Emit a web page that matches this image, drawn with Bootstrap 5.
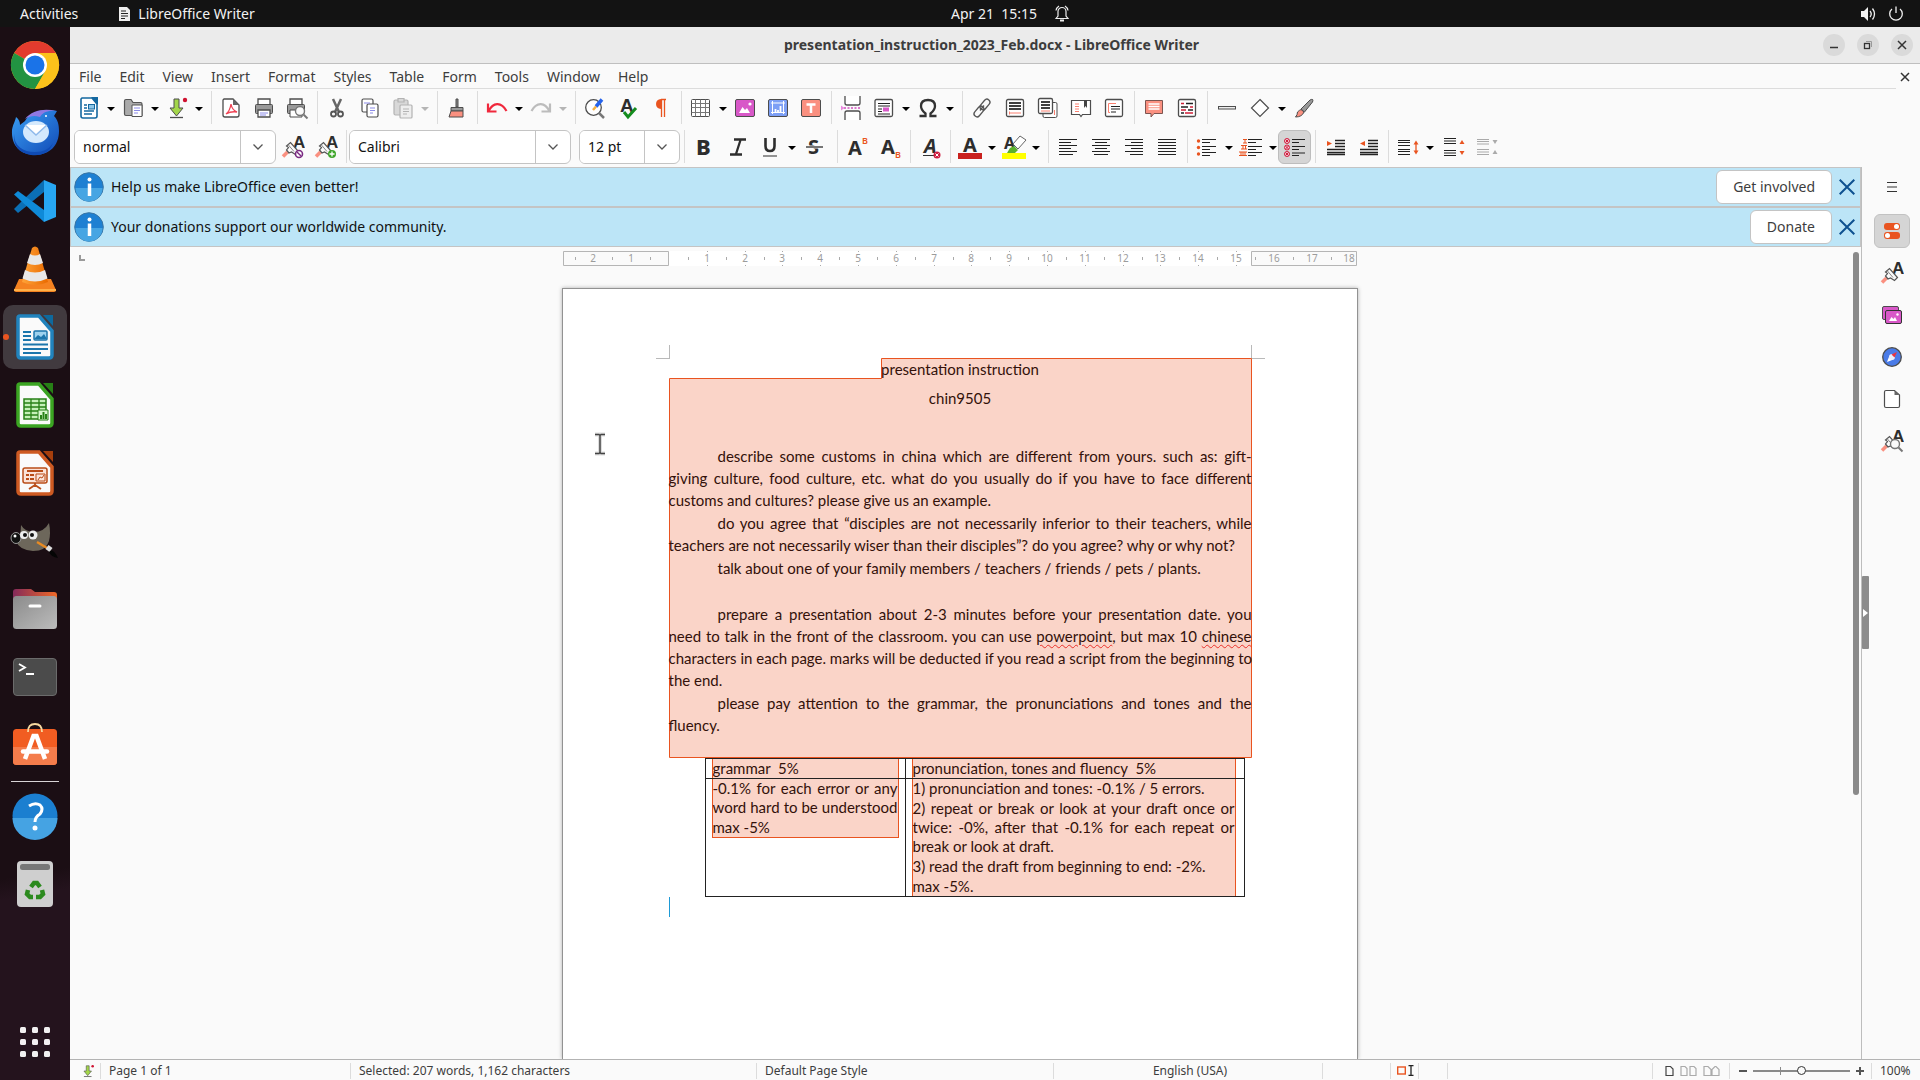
<!DOCTYPE html>
<html lang="en">
<head>
<meta charset="utf-8">
<meta name="viewport" content="width=device-width, initial-scale=1">
<title>presentation_instruction_2023_Feb.docx - LibreOffice Writer</title>
<link href="https://cdn.jsdelivr.net/npm/bootstrap@5.3.0/dist/css/bootstrap.min.css" rel="stylesheet">
<style>
  body { font-family: "Noto Sans", sans-serif; font-size: 14px; line-height: 20px; color: #3d3d3d; background: #fafafa; }
  button, input { font: inherit; color: inherit; }
  button { background: none; border: 0; padding: 0; }
  svg { display: block; flex: none; overflow: visible; }
  .topbar { height: 27px; background: #131313; color: #f2f2f2; }
  .topbar button { color: #f2f2f2; }
  .topbar > div { flex: 1 1 0; }
  .topbar .activities { margin-left: 20px; margin-right: 41px; }
  .topbar .clock { margin-left: 116px; gap: 18px; }
  .dock { width: 70px; background: linear-gradient(170deg, #1b0e14 0 80%, #24131d 82%); padding: 6px 3px 6px; gap: 4px; }
  .dock-item { height: 64px; width: 64px; border-radius: 10px; position: relative; display: flex; align-items: center; justify-content: center; }
  .dock-item.current { background: #413a3f; }
  .dock-item.current::before { content: ""; position: absolute; left: 0; width: 6px; height: 6px; border-radius: 50%; background: #e95420; }
  .dock-line { width: 48px; height: 1px; background: #d8d4d6; margin-bottom: -2px; }
  .titlebar { height: 37px; background: #ebebeb; border-bottom: 1px solid #bfbfbf; font-weight: 700; }
  .titlebar > div { flex: 1 1 0; }
  .titlebar .win-btns { gap: 12px; padding-right: 7px; }
  .win-btn { width: 22px; height: 22px; border-radius: 50%; background: #dadada; display: flex; align-items: center; justify-content: center; }
  .menubar { height: 25px; }
  .menubar nav { border-bottom: 1px solid #dcdcdc; }
  .menubar a { color: #3d3d3d; text-decoration: none; padding: 3px 9px 1px; }
  .menubar .doc-close { width: 24px; }
  .toolrow { height: 39px; padding: 0 0 2px 2px; }
  .toolrow.fmt { padding-left: 4px; }
  .tool { width: 33px; height: 34px; display: flex; align-items: center; justify-content: center; border-radius: 6px; flex: none; }
  .tool.on { background: #d5d5d5; border: 1px solid #bdbdbd; }
  .drop { width: 11px; height: 34px; flex: none; display: flex; align-items: center; justify-content: center; }
  .drop::after { content: ""; border: 4px solid transparent; border-top-color: #000; border-bottom: 0; margin-top: 2px; }
  .drop:disabled::after { border-top-color: #b5b5b5; }
  .tsep { width: 1px; height: 33px; background: #dcdcdc; margin: 0 2px 0 4px; flex: none; }
  .drop + .tsep, .tsep.wide { margin-left: 7px; }
  .combo { height: 34px; border: 1px solid #c4c4c4; border-radius: 6px; background: #fff; display: flex; flex: none; overflow: hidden; color: #000; }
  .combo input { border: 0; outline: 0; padding: 0 8px; flex: 1 1 0; min-width: 0; background: #fff; color: #111; }
  .combo button { width: 35px; border-left: 1px solid #c4c4c4; display: flex; align-items: center; justify-content: center; }
  .combo.w-style { width: 202px; } .combo.w-font { width: 222px; } .combo.w-size { width: 101px; margin-left: 8px; }
  .infobar { height: 40px; background: #bce5f7; border: 1px solid #c4c4c4; color: #111; padding: 0 3px; }
  .infobar span { padding-left: 7px; }
  .infobar .act { height: 34px; border: 1px solid #c4c4c4; border-radius: 6px; background: #fff; color: #3d3d3d; padding: 0 16px; }
  .infobar .shut { width: 30px; height: 34px; display: flex; align-items: center; justify-content: center; margin-right: -5px; }
  .writer { min-width: 0; }
  .canvas-pane { border-right: 1px solid #bdbdbd; min-width: 0; }
  .ruler-row { height: 41px; padding-top: 4px; position: relative; }
  .tab-mark { position: absolute; left: 9px; top: 8px; width: 6px; height: 6px; border: 2px solid #9a9a9a; border-top: 0; border-right: 0; }
  .ruler text { font-size: 10px; fill: #9c9c9c; text-anchor: middle; }
  .sheet { width: 796px; background: #fff; border: 1px solid #929292; border-bottom: 0; box-shadow: 0 0 4px rgba(0,0,0,.3); padding: 69px 105px 0 106px; position: relative; flex: none; height: 100%; }
  .sheet, .sheet table { font-family: Lato, sans-serif; font-size: 15px; line-height: 22px; color: #33110a; }
  .story { position: relative; height: 400px; }
  .story .hl { position: absolute; left: 0; top: 0; }
  .story p { position: relative; margin: 0 0 1px; white-space: nowrap; min-height: 22px; }
  .story p.head { text-align: center; margin-bottom: 7px; }
  .ln { display: block; }
  .ln.full { text-align: justify; text-align-last: justify; white-space: normal; }
  .ln.ind { padding-left: 49px; }
  .typo { text-decoration: underline wavy #e8302a 1px; text-underline-offset: 2px; }
  .corner { position: absolute; top: 56px; width: 14px; height: 14px; border-bottom: 1px solid #b9b9b9; }
  .corner.lt { left: 93px; border-right: 1px solid #b9b9b9; } .corner.rt { right: 92px; border-left: 1px solid #b9b9b9; }
  .marks { width: 540px; margin-left: 36px; table-layout: fixed; border-collapse: collapse; }
  .marks td { border: 1px solid #222; padding: 0 6px; vertical-align: top; }
  .marks.marks { line-height: 19px; }
  .marks .pick { background: #fad4c8; border: 1px solid #e95420; border-top-width: 0; white-space: nowrap; }
  .marks .pick.flush { border-bottom: 0; }
  .marks p { margin: 0 0 1px; } .marks p:last-child { margin: 0; }
  .marks .cell-r { padding-right: 8px; }
  .caret { width: 1px; height: 20px; background: #1e9ad6; }
  .vbar { width: 12px; padding: 5px 0 0 4px; }
  .vbar div { width: 6px; height: 543px; border-radius: 3px; background: #8a8a8a; }
  .pointer { position: absolute; left: 522px; top: 185px; }
  .sidegrip { width: 7px; padding-top: 409px; }
  .sidegrip button { width: 7px; height: 73px; background: #8c8c8c; display: flex; align-items: center; justify-content: center; border-radius: 1px; }
  .deck { width: 51px; padding: 3px 6px 0 0; gap: 8px; }
  .deck button { width: 36px; height: 34px; border-radius: 6px; display: flex; align-items: center; justify-content: center; border: 1px solid transparent; }
  .deck button.on { background: #d5d5d5; border-color: #c2c2c2; }
  .deck button:first-child { margin-bottom: 2px; }
  .statusbar { height: 21px; border-top: 1px solid #b3b3b3; font-size: 12px; line-height: 20px; padding-top: 1px; }
  .statusbar > div { border-left: 1px solid #dcdcdc; height: 16px; padding-left: 8px; display: flex; align-items: center; flex: none; white-space: nowrap; }
  .statusbar > div:first-child { border-left: 0; }
  .zoomer { appearance: none; width: 97px; height: 14px; margin: 0 5px; background: linear-gradient(#8a8a8a,#8a8a8a) center/100% 2px no-repeat, linear-gradient(#8a8a8a,#8a8a8a) 27px 50%/1px 8px no-repeat; }
  .zoomer::-webkit-slider-thumb { appearance: none; width: 9px; height: 9px; border-radius: 50%; background: #fafafa; border: 1px solid #333; }
</style>
</head>
<body>
<svg width="0" height="0" class="position-absolute" aria-hidden="true">
  <defs>
    <symbol id="chev" viewBox="0 0 12 8"><path d="M1.500 1.500 6 6l4.500-4.500" fill="none" stroke="#555" stroke-width="1.300"/></symbol>
    <symbol id="brushA" viewBox="0 0 24 24"><text x="12" y="13" font-family="Liberation Sans" font-weight="700" font-size="17" fill="#2d2d2d">A</text><path d="M2 21.500 6.500 17" stroke="#fa9080" stroke-width="3.500"/><path d="m5.500 15 2.500 3 2.500-1 4 2.500 3-3-8-9-4 3.500 2 1.500z" fill="#fafafa" stroke="#555" stroke-width="1.200"/><path d="m7 9.500 6 7" stroke="#888"/></symbol>
    <symbol id="saveic" viewBox="0 0 24 24"><path d="M9 3h5v9h4l-6.500 8L5 12h4z" fill="#a3d64a" stroke="#4d4d4d"/><path d="M5 21.500h13" stroke="#4d4d4d" stroke-width="1.300"/><circle cx="20" cy="4" r="2.200" fill="#cf1230"/></symbol>
    <symbol id="infoic" viewBox="0 0 30 30"><circle cx="15" cy="15" r="14.300" fill="#1e80d2" stroke="#3b75a3"/><path d="M1.500 16a13.500 13.500 0 0 0 27 0z" fill="#46a5e3"/><circle cx="15.500" cy="7.500" r="2" fill="#fff"/><path d="M15.500 11.500v12.500" stroke="#fff" stroke-width="3.500"/></symbol>
    <symbol id="xblue" viewBox="0 0 16 16"><path d="m.7.700 14.600 14.600M15.300.7.700 15.300" stroke="#0e5190" stroke-width="2" fill="none"/></symbol>
    <symbol id="xsmall" viewBox="0 0 10 10"><path d="m1 1 8 8M9 1 1 9" stroke="#333" stroke-width="1.500" fill="none"/></symbol>
    <symbol id="mag" viewBox="0 0 24 24"><circle cx="15" cy="15" r="4.500" fill="#fafafa" stroke="#777" stroke-width="1.400"/><path d="m18.500 18.500 4 4" stroke="#777" stroke-width="2"/></symbol>
    <linearGradient id="grayg" x2="1" y2="1"><stop stop-color="#8b8b8b"/><stop offset="1" stop-color="#bcbcbc"/></linearGradient>
    <linearGradient id="foldg"><stop stop-color="#842a5a"/><stop offset="1" stop-color="#f06a28"/></linearGradient>
    <linearGradient id="coneg"><stop stop-color="#ffa338"/><stop offset="1" stop-color="#e96a00"/></linearGradient>
    <linearGradient id="birdg" x2="1" y2="1"><stop stop-color="#3aa0f5"/><stop offset="1" stop-color="#1149b5"/></linearGradient>
  </defs>
</svg>

<div class="vh-100 d-flex flex-column overflow-hidden">
  <header class="topbar d-flex align-items-center flex-shrink-0">
    <div class="d-flex align-items-center">
      <button type="button" class="activities">Activities</button>
      <button type="button" class="d-flex align-items-center gap-2">
        <svg width="11" height="15" viewBox="0 0 11 15"><path d="M0 1h8l3 3v11H0z" fill="#eee"/><path d="M2 5h5M2 7.500h7M2 10h7M2 12.500h4" stroke="#222"/></svg>
        LibreOffice Writer
      </button>
    </div>
    <button type="button" class="clock d-flex align-items-center"><span>Apr 21&nbsp; 15:15</span>
      <svg width="14" height="17" viewBox="0 0 14 17" fill="none" stroke="#eee" stroke-width="1.200"><path d="M1 13.500 3 11V6.500a4 4 0 0 1 8 0V11l2 2.500zM1 5.500Q1.500 2.500 4 1M13 5.500Q12.500 2.500 10 1"/><path d="M5 15.500h4" stroke-width="2"/></svg>
    </button>
    <div class="d-flex justify-content-end align-items-center gap-2 pe-3">
      <svg width="16" height="16" viewBox="0 0 16 16" class="me-1"><path d="M1 5h3l4-4v14l-4-4H1z" fill="#f2f2f2"/><path d="M10 5q2.500 3 0 6M12.500 2.500q4 5.500 0 11" fill="none" stroke="#f2f2f2" stroke-width="1.300"/></svg>
      <svg width="16" height="16" viewBox="0 0 16 16" fill="none" stroke="#f2f2f2" stroke-width="1.300"><path d="M4 3a6.300 6.300 0 1 0 8 0M8 .5V7"/></svg>
    </div>
  </header>

  <div class="d-flex flex-grow-1 overflow-hidden">
    <nav class="dock d-flex flex-column align-items-center flex-shrink-0" aria-label="Dock">
      <a class="dock-item" href="#" aria-label="Chrome"><svg width="48" height="48" viewBox="0 0 48 48"><circle cx="24" cy="24" r="24" fill="#fcc21b"/><path d="M24 24 3.200 12A24 24 0 0 1 44.800 12z" fill="#e33b2e"/><path d="M24 24 3.200 12A24 24 0 0 0 24 48l10.400-18z" fill="#229342"/><path d="M24 12h20.800A24 24 0 0 1 24 48l10.400-18z" fill="#fcc21b"/><circle cx="24" cy="24" r="12" fill="#fff"/><circle cx="24" cy="24" r="9.500" fill="#1a73e8"/></svg></a>
      <a class="dock-item" href="#" aria-label="Thunderbird"><svg width="50" height="50" viewBox="0 0 50 50"><path d="M2 22C3 16 5 14 6 9c3 2 4 5 4 8 2-2 4-3 5-4C20 4 34 0 47 3l-3 5c4 4 5 9 5 15 0 15-10 24-24 24S1 38 2 22z" fill="url(#birdg)"/><path d="M15 11C22 2 34 0 47 3c-9-1-14 1-17 6-6-2-10-1-15 2z" fill="#8f78e2"/><path d="M4 26c0 12 9 18 21 18 9 0 14-3 18-9-4 11-13 13-22 12C9 45 3 38 4 26z" fill="#0f4bb5"/><ellipse cx="26" cy="24" rx="13" ry="11" fill="#d4e9fd"/><path d="m15 17 11 10 11-10" fill="#fff" stroke="#8fb9ea" stroke-width="1.500"/><circle cx="36" cy="8" r="1" fill="#fff"/></svg></a>
      <a class="dock-item" href="#" aria-label="Visual Studio Code"><svg width="44" height="44" viewBox="0 0 44 44"><path d="M31 1 11 20 1 30l4 4L31 13z" fill="#0b6fb5"/><path d="M5 12 1 15.500 31 43V31z" fill="#0f8ad8"/><path d="M31 1 43 6v32l-12 5z" fill="#27a6f2"/></svg></a>
      <a class="dock-item" href="#" aria-label="VLC"><svg width="44" height="48" viewBox="0 0 44 48"><path d="M6 34h32l5 11q0 2-2 2H3q-2 0-2-2z" fill="#f58220"/><path d="M19 3q3-3 6 0l10 34q-13 6-26 0z" fill="url(#coneg)"/><path d="m17 9-3 9q8 4 16 0l-3-9q-5 3-10 0zM12 25l-2.500 8.500q12.500 6 25 0L32 25q-10 5-20 0z" fill="#e8e8e8"/><path d="M1 45h42" stroke="#ffb14a" stroke-width="2"/></svg></a>
      <a class="dock-item current" href="#" aria-label="LibreOffice Writer"><svg width="38" height="46" viewBox="0 0 38 46"><path d="M4 2h19l13 15v24q0 3-3 3H5q-3 0-3-3V4q0-2 2-2z" fill="#fafafa" stroke="#2183bd" stroke-width="3.500"/><path d="M27 1h10v11z" fill="#0e699d"/><path d="M7 18h8M7 22h8M7 26h8M7 30.500h25M7 35h25M7 39h18" stroke="#1c76ac" stroke-width="1.800"/><rect x="18" y="17" width="13" height="9" rx="1" fill="#9ed2ee" stroke="#1c76ac" stroke-width="1.500"/><path d="m18 25 4-4 3 2 3-3 3 5z" fill="#1c76ac"/></svg></a>
      <a class="dock-item" href="#" aria-label="LibreOffice Calc"><svg width="38" height="46" viewBox="0 0 38 46"><path d="M4 2h19l13 15v24q0 3-3 3H5q-3 0-3-3V4q0-2 2-2z" fill="#fafafa" stroke="#3ba522" stroke-width="3.500"/><path d="M27 1h10v11z" fill="#278016"/><rect x="8" y="17" width="22" height="20" fill="#c5f0b8" stroke="#278016" stroke-width="1.500"/><path d="M8 21h22M8 25h22M8 29h22M8 33h22M15 17v20M23 17v20" stroke="#278016" stroke-width="1.300"/><path d="M22 28h10v10H22z" fill="#d7f6cd" stroke="#278016"/><path d="M25 37v-4M27.500 37v-7M30 37v-5" stroke="#278016" stroke-width="2"/></svg></a>
      <a class="dock-item" href="#" aria-label="LibreOffice Impress"><svg width="38" height="46" viewBox="0 0 38 46"><path d="M4 2h19l13 15v24q0 3-3 3H5q-3 0-3-3V4q0-2 2-2z" fill="#fafafa" stroke="#ce5a22" stroke-width="3.500"/><path d="M27 1h10v11z" fill="#a63e0c"/><rect x="7" y="18" width="24" height="15" rx="2" fill="#fbe3d8" stroke="#b94d18" stroke-width="1.500"/><path d="M11 21h16M10 25h3M10 29h3M14 25h4M14 29h4M19 33v4M19 35l-6 4M19 35l6 4" stroke="#b94d18" stroke-width="1.800"/><path d="M20 24h9v7h-9zM22 30l2-3 2 1 2-3" fill="none" stroke="#b94d18"/></svg></a>
      <a class="dock-item" href="#" aria-label="GIMP"><svg width="48" height="40" viewBox="0 0 48 40"><path d="M10 4q4 7 13 7 10 0 15-9 2 10 0 18-3 10-16 10Q8 29 5 20q5-4 5-16z" fill="#6d675b"/><ellipse cx="5" cy="17" rx="5" ry="5.500" fill="#111" stroke="#999"/><circle cx="4" cy="15" r="1.500" fill="#fff"/><circle cx="13" cy="14" r="4" fill="#eee"/><circle cx="22" cy="14" r="4.500" fill="#eee"/><circle cx="14" cy="14" r="2" fill="#111"/><circle cx="21" cy="14" r="2" fill="#111"/><path d="m26 21 10 6" stroke="#e88a22" stroke-width="2.500"/><path d="m36 26 4 3" stroke="#ddd" stroke-width="5"/><path d="M38 31q4-5 9 6-7-1-9-6z" fill="#050505"/></svg></a>
      <a class="dock-item" href="#" aria-label="Files"><svg width="44" height="42" viewBox="0 0 44 42"><path d="M0 20V4q0-3 3-3h15l4 3h19q3 0 3 3v13z" fill="url(#foldg)"/><rect y="8" width="44" height="33" rx="3.500" fill="url(#grayg)"/><path d="M17 18h10" stroke="#fff" stroke-width="3" stroke-linecap="round"/></svg></a>
      <a class="dock-item" href="#" aria-label="Terminal"><svg width="44" height="38" viewBox="0 0 44 38"><rect x=".5" y=".5" width="43" height="37" rx="3.500" fill="#4b4b4b" stroke="#6b6b6b"/><path d="m6 6 6 3.500L6 13M13 16h8" fill="none" stroke="#fff" stroke-width="1.800"/></svg></a>
      <a class="dock-item" href="#" aria-label="Software"><svg width="44" height="44" viewBox="0 0 44 44"><rect y="6" width="44" height="36" rx="3.500" fill="#f15d22"/><path d="M0 24h44v14.500q0 3.500-3.500 3.500h-37Q0 42 0 38.500z" fill="#f47c4b"/><path d="M15 9q0-8 7-8t7 8" fill="none" stroke="#f7d9a0" stroke-width="1.800"/><path d="m12 36 8.500-23h3L32 36" fill="none" stroke="#fff" stroke-width="4.500"/><path d="M10 28.500h24" stroke="#fff" stroke-width="4.500" stroke-linecap="round"/></svg></a>
      <span class="dock-line"></span>
      <a class="dock-item" href="#" aria-label="Help"><svg width="46" height="46" viewBox="0 0 46 46"><circle cx="23" cy="23" r="22.500" fill="#1b7fd0"/><path d="M.5 25a22.500 22 0 0 0 45 0z" fill="#45a3e3"/><path d="M17 13q6-4 11-1 4 4 0 9-5 3-5 8" fill="none" stroke="#fff" stroke-width="3"/><circle cx="23" cy="35" r="2.500" fill="#fff"/></svg></a>
      <a class="dock-item" href="#" aria-label="Trash"><svg width="36" height="46" viewBox="0 0 36 46"><rect width="36" height="46" rx="4" fill="#cfcfcf"/><rect x="3" y="3" width="30" height="6" rx="2.500" fill="#777"/><g fill="none" stroke="#2c8a1e" stroke-width="4.500"><path d="m14 26 3-4h3l3 4M11 29l-1 4 3 3h3M25 29l1 4-3 3h-4"/></g></svg></a>
      <a class="dock-item mt-auto" href="#" aria-label="Show Applications"><svg width="32" height="32" viewBox="0 0 32 32" fill="#f2f0f1"><g id="r3"><rect x="1" y="1" width="6" height="6" rx="1.500"/><rect x="13" y="1" width="6" height="6" rx="1.500"/><rect x="25" y="1" width="6" height="6" rx="1.500"/></g><use href="#r3" y="12"/><use href="#r3" y="24"/></svg></a>
    </nav>

    <main class="writer d-flex flex-column flex-grow-1">
      <div class="titlebar d-flex align-items-center flex-shrink-0">
        <div></div><span>presentation_instruction_2023_Feb.docx - LibreOffice Writer</span>
        <div class="win-btns d-flex justify-content-end">
          <button type="button" class="win-btn" aria-label="Minimize"><svg width="10" height="10"><path d="M1 7.500h8" stroke="#333" stroke-width="1.500"/></svg></button>
          <button type="button" class="win-btn" aria-label="Restore"><svg width="10" height="10" fill="none"><path d="M3 1.500h5.500V7" stroke="#999"/><rect x="1.500" y="3.500" width="5" height="5" stroke="#333" stroke-width="1.300"/></svg></button>
          <button type="button" class="win-btn" aria-label="Close"><svg width="10" height="10"><use href="#xsmall"/></svg></button>
        </div>
      </div>

      <div class="menubar d-flex flex-shrink-0">
        <nav class="d-flex flex-grow-1" aria-label="Menu"><a href="#">File</a><a href="#">Edit</a><a href="#">View</a><a href="#">Insert</a><a href="#">Format</a><a href="#">Styles</a><a href="#">Table</a><a href="#">Form</a><a href="#">Tools</a><a href="#">Window</a><a href="#">Help</a></nav>
        <button type="button" class="doc-close" aria-label="Close document"><svg width="10" height="10" class="ms-1"><use href="#xsmall"/></svg></button>
      </div>

      <div class="toolrow d-flex align-items-center flex-shrink-0" role="toolbar" aria-label="Standard">
        <button class="tool" aria-label="New"><svg width="20" height="24" viewBox="0 0 20 24"><path d="M3 2h10l5 6v12q0 2-2 2H4q-2 0-2-2V3z" fill="#fff" stroke="#1468a0" stroke-width="1.600"/><path d="M12 1h7v8z" fill="#1468a0"/><path d="M5 9h3M5 12h3M5 15h10M5 18h8" stroke="#1468a0" stroke-width="1.400"/><rect x="9.500" y="8.500" width="6" height="4.500" fill="#8cc6e8" stroke="#1468a0"/></svg></button><button class="drop" aria-label="New options"></button>
        <button class="tool" aria-label="Open"><svg width="24" height="24" viewBox="0 0 24 24"><path d="M3.500 5q0-1.500 1.500-1.500h5l2 3h7.500q1.500 0 1.500 1.500v11.500h-16q-1.500 0-1.500-1.500z" fill="#aaa" stroke="#555" stroke-width="1.200"/><path d="M11 9h10v11.500H11z" fill="#fff" stroke="#555"/><path d="M13 12h6M13 14.500h6M13 17h4" stroke="#8c8ce8"/></svg></button><button class="drop" aria-label="Open options"></button>
        <button class="tool" aria-label="Save"><svg width="24" height="24"><use href="#saveic"/></svg></button><button class="drop" aria-label="Save options"></button>
        <span class="tsep"></span>
        <button class="tool" aria-label="Export as PDF"><svg width="24" height="24" viewBox="0 0 24 24"><path d="M5 3h9l6 6v10q0 2-2 2H6q-2 0-2-2V4z" fill="#fff" stroke="#4d4d4d" stroke-width="1.300"/><path d="M14 3v6h6z" fill="#666"/><path d="M7 18q4-3 5-10 1 6 6 8-6-1-11 2z" fill="none" stroke="#ef4455" stroke-width="1.300"/></svg></button>
        <button class="tool" aria-label="Print"><svg width="24" height="24" viewBox="0 0 24 24"><path d="M6 8V3h12v5" fill="#fff" stroke="#4d4d4d" stroke-width="1.300"/><rect x="3.500" y="8.500" width="17" height="9" rx="1" fill="#9a9a9a" stroke="#4d4d4d"/><path d="M6 14h12v7H6z" fill="#fff" stroke="#4d4d4d" stroke-width="1.300"/><path d="M8 17h8M8 19h6" stroke="#8c8ce8"/></svg></button>
        <button class="tool" aria-label="Print preview"><svg width="24" height="24" viewBox="0 0 24 24"><path d="M5 8V3h12v5" fill="#fff" stroke="#4d4d4d" stroke-width="1.300"/><rect x="2.500" y="8.500" width="17" height="9" rx="1" fill="#9a9a9a" stroke="#4d4d4d"/><path d="M5 14h12v7H5z" fill="#fff" stroke="#4d4d4d"/><use href="#mag" width="24" height="24"/></svg></button>
        <span class="tsep"></span>
        <button class="tool" aria-label="Cut"><svg width="24" height="24" viewBox="0 0 24 24" fill="none"><path d="m8 3 6 13M16 3l-6 13" stroke="#666" stroke-width="2.500"/><circle cx="8.500" cy="18" r="2.500" stroke="#555" stroke-width="1.800"/><circle cx="15.500" cy="18" r="2.500" stroke="#555" stroke-width="1.800"/></svg></button>
        <button class="tool" aria-label="Copy"><svg width="24" height="24" viewBox="0 0 24 24" fill="#fff" stroke="#4d4d4d" stroke-width="1.200"><rect x="4" y="3" width="11" height="13" rx="1.500"/><rect x="9" y="8" width="11" height="13" rx="1.500"/><path d="M12 12h5M12 14.500h5M12 17h3M6 7h6" stroke="#8c8ce8"/></svg></button>
        <button class="tool" aria-label="Paste" disabled><svg width="24" height="24" viewBox="0 0 24 24" fill="#d8d8d8" stroke="#b3b3b3" stroke-width="1.200"><rect x="3" y="4" width="14" height="15" rx="1.500"/><path d="M7 2.500h6V6H7z"/><rect x="9" y="9" width="12" height="13" rx="1" fill="#eee"/><path d="M12 13h6M12 15.500h6M12 18h4"/></svg></button><button class="drop" aria-label="Paste options" disabled></button>
        <span class="tsep"></span>
        <button class="tool" aria-label="Clone formatting"><svg width="24" height="24" viewBox="0 0 24 24"><path d="M11 3h2v8h-2z" fill="#888" stroke="#4d4d4d"/><path d="M6 11.500h12V15H6z" fill="#999" stroke="#4d4d4d"/><path d="M6 15h12v6H4z" fill="#fa9080" stroke="#4d4d4d"/></svg></button>
        <span class="tsep"></span>
        <button class="tool" aria-label="Undo"><svg width="24" height="24" viewBox="0 0 24 24"><path d="M3 16.500V7.500M2 15.500h9.500M3.500 15C8 6.500 16 5 21.500 15" fill="none" stroke="#f0283c" stroke-width="2.200"/></svg></button><button class="drop" aria-label="Undo options"></button>
        <button class="tool" aria-label="Redo" disabled><svg width="24" height="24" viewBox="0 0 24 24"><path d="M21 16.500V7.500M22 15.500h-9.500M20.500 15C16 6.500 8 5 2.500 15" fill="none" stroke="#bcbcbc" stroke-width="2.200"/></svg></button><button class="drop" aria-label="Redo options" disabled></button>
        <span class="tsep"></span>
        <button class="tool" aria-label="Find and replace"><svg width="24" height="24" viewBox="0 0 24 24"><circle cx="10.500" cy="11.500" r="7.800" fill="#fff" stroke="#4d4d4d" stroke-width="1.300"/><path d="m16 17 5 5" stroke="#777" stroke-width="2.500"/><path d="m13 10.500 6-7" stroke="#2563eb" stroke-width="3.500"/><path d="m10 14 3-3.500" stroke="#f4b042" stroke-width="2.500"/></svg></button>
        <button class="tool" aria-label="Spelling"><svg width="24" height="24" viewBox="0 0 24 24"><text x="4" y="16" font-family="Liberation Sans" font-weight="700" font-size="19" fill="#2d2d2d">A</text><path d="m8 16 4 5 8-9" fill="none" stroke="#148c1e" stroke-width="3"/></svg></button>
        <button class="tool" aria-label="Formatting marks"><svg width="24" height="24" viewBox="0 0 24 24"><path d="M12 3q-5 .5-5 5t5 5z" fill="#e95420"/><path d="M12 3.500h5M12.500 3v18M15.500 3v18" stroke="#e95420" stroke-width="1.300"/></svg></button>
        <span class="tsep"></span>
        <button class="tool" aria-label="Insert table"><svg width="24" height="24" viewBox="0 0 24 24"><rect x="2.500" y="3.500" width="18" height="17" rx="1" fill="#fff" stroke="#4d4d4d"/><path d="M2.500 7.500h18M2.500 11.500h18M2.500 16.500h18M6.500 3.500v17M11.500 3.500v17M16.500 3.500v17" stroke="#777"/></svg></button><button class="drop" aria-label="Table options"></button>
        <button class="tool" aria-label="Insert image"><svg width="24" height="24" viewBox="0 0 24 24"><rect x="2.500" y="3.500" width="19" height="17" rx="1.500" fill="#d858c8" stroke="#4d4d4d"/><path d="m6 17 3.500-6 2.500 3 2-2 3 5z" fill="#fff"/><circle cx="17" cy="8" r="1.600" fill="#fff"/></svg></button>
        <button class="tool" aria-label="Insert chart"><svg width="24" height="24" viewBox="0 0 24 24"><rect x="2.500" y="3.500" width="19" height="17" rx="1.500" fill="#7d9ff5" stroke="#4d4d4d"/><path d="M6.500 5v13M5 16.500h14M5 7h14M17.500 5v13" stroke="#fff"/><path d="M9.500 16v-3M12 16v-2M14.500 16v-6" stroke="#fff" stroke-width="1.800"/></svg></button>
        <button class="tool" aria-label="Insert text box"><svg width="24" height="24" viewBox="0 0 24 24"><rect x="2.500" y="3.500" width="19" height="17" rx="1.500" fill="#fa9080" stroke="#4d4d4d"/><path d="M7.500 8.500h9M12 8v9" stroke="#fff" stroke-width="2.500"/></svg></button>
        <span class="tsep"></span>
        <button class="tool" aria-label="Page break"><svg width="24" height="24" viewBox="0 0 24 24" fill="#fff" stroke="#4d4d4d" stroke-width="1.300"><path d="M6 0v7q0 2 2 2h11q2 0 2-2V0M6 24v-7q0-2 2-2h11q2 0 2 2v7"/><path d="M5 12h17" stroke="#cf4fbf" stroke-dasharray="2 1.500"/><path d="m2 9.500 3.500 2.500L2 14.500z" fill="#e88ade" stroke="none"/></svg></button>
        <button class="tool" aria-label="Insert field"><svg width="24" height="24" viewBox="0 0 24 24"><rect x="3" y="3.500" width="17.500" height="17" rx="1.500" fill="#fff" stroke="#4d4d4d" stroke-width="1.300"/><path d="M6 7.500h12M6 10h12M6 13h4M6 15.500h4M6 18h12" stroke="#222" stroke-width="1.200"/><path d="M11 11.500h6v4h-6z" fill="#d858c8"/></svg></button><button class="drop" aria-label="Field options"></button>
        <button class="tool" aria-label="Special character"><svg width="24" height="24" viewBox="0 0 24 24"><path d="M3.500 20h6v-2.500Q5 14 5 10q0-6 7-6t7 6q0 4-4.500 7.500V20h6" fill="none" stroke="#333" stroke-width="2.300"/></svg></button><button class="drop" aria-label="Character options"></button>
        <span class="tsep"></span>
        <button class="tool" aria-label="Hyperlink"><svg width="24" height="24" viewBox="0 0 24 24" fill="none" stroke="#555" stroke-width="1.300"><rect x="9" y="5.500" width="12" height="6" rx="3" transform="rotate(-50 15 8.500)"/><rect x="3" y="12.500" width="12" height="6" rx="3" transform="rotate(-50 9 15.500)"/><path d="m10 14.500 4-5"/></svg></button>
        <button class="tool" aria-label="Footnote"><svg width="24" height="24" viewBox="0 0 24 24"><rect x="3.500" y="3.500" width="17" height="17" rx="1.500" fill="#fff" stroke="#4d4d4d" stroke-width="1.300"/><path d="M6 7h12M6 10h12M6 13h12" stroke="#000" stroke-width="1.300"/><path d="M6 17h12M6.500 15.500v3" stroke="#fa8070"/></svg></button>
        <button class="tool" aria-label="Endnote"><svg width="24" height="24" viewBox="0 0 24 24"><rect x="7" y="6.500" width="14" height="15" rx="1.500" fill="#fff" stroke="#4d4d4d"/><rect x="2.500" y="2.500" width="14" height="15" rx="1.500" fill="#fff" stroke="#4d4d4d" stroke-width="1.300"/><path d="M5 6h9M5 9h9M5 12h9" stroke="#000" stroke-width="1.300"/><path d="M5 15h9M18.500 19v-5" stroke="#fa8070"/></svg></button>
        <button class="tool" aria-label="Bookmark"><svg width="24" height="24" viewBox="0 0 24 24"><path d="M2.500 4.500h19v14h-8l-1.500 2-1.500-2h-8z" fill="#fff" stroke="#4d4d4d" stroke-width="1.200"/><path d="M15 4h3v8l-1.500-2-1.500 2z" fill="#444"/><path d="M6 8h4M6 10.500h4M6 13h4M6 15.500h4" stroke="#fa8070"/></svg></button>
        <button class="tool" aria-label="Cross-reference"><svg width="24" height="24" viewBox="0 0 24 24"><rect x="3.500" y="3.500" width="17" height="17" rx="1.500" fill="#fff" stroke="#4d4d4d" stroke-width="1.300"/><path d="M14 7.500H6.500v9H8" fill="none" stroke="#fa8070"/><path d="M9 10.500h9M9 13h9M9 16h5" stroke="#222" stroke-width="1.200"/></svg></button>
        <span class="tsep"></span>
        <button class="tool" aria-label="Comment"><svg width="24" height="24" viewBox="0 0 24 24"><path d="M3.500 4.500h17v13H12l-3 3.500v-3.500H3.500z" fill="#fa9080" stroke="#7c5550"/><path d="M6.500 8h11M6.500 10.500h11M6.500 13h11" stroke="#fff" stroke-width="1.300"/></svg></button>
        <button class="tool" aria-label="Track changes"><svg width="24" height="24" viewBox="0 0 24 24"><rect x="3.500" y="3.500" width="17" height="17" rx="1.500" fill="#fff" stroke="#4d4d4d" stroke-width="1.300"/><path d="M6 7.500h3M15 11h3M6 14h5M10 17h8" stroke="#d02038" stroke-width="1.300"/><path d="M11 7.500h7M6 11h7M13 14h5M6 17h3" stroke="#222" stroke-width="1.300"/></svg></button>
        <span class="tsep"></span>
        <button class="tool" aria-label="Line"><svg width="24" height="24" viewBox="0 0 24 24"><rect x="3.500" y="10.500" width="17" height="2.500" fill="#eee" stroke="#4d4d4d"/></svg></button>
        <button class="tool" aria-label="Shapes"><svg width="24" height="24" viewBox="0 0 24 24"><path d="m12 3.500 8.500 8.500-8.500 8.500L3.500 12z" fill="#fff" stroke="#4d4d4d" stroke-width="1.200"/></svg></button><button class="drop" aria-label="Shape options"></button>
        <button class="tool" aria-label="Draw functions"><svg width="24" height="24" viewBox="0 0 24 24"><path d="M9 13 18 4q4-2 2.500 2l-8 10z" fill="#999" stroke="#4d4d4d"/><path d="M9 13.500 12 16q-2 5-8.500 5 2-2 2-5 2-2 3.500-2.500z" fill="#fa9080" stroke="#4d4d4d"/></svg></button>
      </div>

      <div class="toolrow fmt d-flex align-items-center flex-shrink-0" role="toolbar" aria-label="Formatting">
        <div class="combo w-style"><input value="normal" aria-label="Paragraph style"><button aria-label="Choose style"><svg width="12" height="8"><use href="#chev"/></svg></button></div>
        <button class="tool" aria-label="Update style"><svg width="24" height="24" viewBox="0 0 24 24"><use href="#brushA" width="24" height="24"/><circle cx="18" cy="19" r="3.500" fill="#fff" stroke="#7a2a82" stroke-width="1.600"/><path d="m16 17 4 4" stroke="#7a2a82" stroke-width="1.500"/></svg></button>
        <button class="tool" aria-label="New style"><svg width="24" height="24" viewBox="0 0 24 24"><use href="#brushA" width="24" height="24"/><circle cx="18" cy="19" r="4" fill="#3fa62b"/><path d="M15.500 19h5M18 16.500v5" stroke="#fff" stroke-width="1.300"/></svg></button>
        <span class="tsep"></span>
        <div class="combo w-font"><input value="Calibri" aria-label="Font name"><button aria-label="Choose font"><svg width="12" height="8"><use href="#chev"/></svg></button></div>
        <div class="combo w-size"><input value="12 pt" aria-label="Font size"><button aria-label="Choose size"><svg width="12" height="8"><use href="#chev"/></svg></button></div>
        <span class="tsep"></span>
        <button class="tool" aria-label="Bold"><svg width="24" height="24" viewBox="0 0 24 24"><text x="4" y="20" font-size="22" font-family="Noto Sans" font-weight="800" fill="#2d2d2d">B</text></svg></button>
        <button class="tool" aria-label="Italic"><svg width="24" height="24" viewBox="0 0 24 24"><path d="M9 4.500h12M5 19.500h12M15.500 5l-4.500 14" stroke="#2d2d2d" stroke-width="2.300"/></svg></button>
        <button class="tool" aria-label="Underline"><svg width="24" height="24" viewBox="0 0 24 24"><path d="M7.500 3v8q0 5 4.500 5t4.500-5V3" fill="none" stroke="#2d2d2d" stroke-width="2.600"/><path d="M5 21h14" stroke="#2d2d2d"/></svg></button><button class="drop" aria-label="Underline options"></button>
        <button class="tool" aria-label="Strikethrough"><svg width="24" height="24" viewBox="0 0 24 24"><text x="6" y="19" font-size="20" font-family="Noto Sans" font-weight="700" fill="#2d2d2d">S</text><path d="M4 12h17" stroke="#fafafa" stroke-width="3"/><path d="M4 12h17" stroke="#2d2d2d" stroke-width="1.300"/></svg></button>
        <span class="tsep wide"></span>
        <button class="tool" aria-label="Superscript"><svg width="24" height="24" viewBox="0 0 24 24"><text x="3" y="20" font-size="20" font-family="Noto Sans" font-weight="700" fill="#2d2d2d">A</text><text x="17" y="9" font-size="9" font-family="Noto Sans" font-weight="600" fill="#e95420">B</text></svg></button>
        <button class="tool" aria-label="Subscript"><svg width="24" height="24" viewBox="0 0 24 24"><text x="3" y="19" font-size="20" font-family="Noto Sans" font-weight="700" fill="#2d2d2d">A</text><text x="17" y="23" font-size="9" font-family="Noto Sans" font-weight="600" fill="#e95420">B</text></svg></button>
        <span class="tsep"></span>
        <button class="tool" aria-label="Clear formatting"><svg width="24" height="24" viewBox="0 0 24 24"><text x="6" y="18" font-size="20" font-family="Noto Sans" font-weight="700" font-style="italic" fill="#2d2d2d">A</text><path d="M5 20.500h12" stroke="#333"/><circle cx="19" cy="20" r="3.500" fill="#d01e40"/><path d="m17.500 18.500 3 3M20.500 18.500l-3 3" stroke="#fff"/></svg></button>
        <span class="tsep"></span>
        <button class="tool" aria-label="Font color"><svg width="24" height="24" viewBox="0 0 24 24"><text x="5" y="17" font-size="20" font-family="Noto Sans" font-weight="700" fill="#2d2d2d">A</text><path d="M0 18h24v6H0z" fill="#c9211e"/></svg></button><button class="drop" aria-label="Color options"></button>
        <button class="tool" aria-label="Highlighting"><svg width="24" height="24" viewBox="0 0 24 24"><text x="2" y="14" font-size="16" font-family="Noto Sans" font-weight="700" fill="#2d2d2d">A</text><path d="m11 9 7-8 6 4-8 9z" fill="#fff" stroke="#666"/><path d="M8 13l4-2 4 4-3 3H5z" fill="#5bb02c"/><path d="M0 18h24v6H0z" fill="#ffff00"/></svg></button><button class="drop" aria-label="Highlight options"></button>
        <span class="tsep"></span>
        <button class="tool" aria-label="Align left"><svg width="24" height="24" viewBox="0 0 24 24"><path d="M3 4.500h18M3 7.500h12M3 10.500h18M3 13.500h12M3 16.500h18M3 19.500h14" stroke="#222" stroke-width="1.200"/></svg></button>
        <button class="tool" aria-label="Align center"><svg width="24" height="24" viewBox="0 0 24 24"><path d="M3 4.500h18M6 7.500h12M3 10.500h18M6 13.500h12M3 16.500h18M5 19.500h14" stroke="#222" stroke-width="1.200"/></svg></button>
        <button class="tool" aria-label="Align right"><svg width="24" height="24" viewBox="0 0 24 24"><path d="M3 4.500h18M9 7.500h12M3 10.500h18M9 13.500h12M3 16.500h18M8 19.500h13" stroke="#222" stroke-width="1.200"/></svg></button>
        <button class="tool" aria-label="Justify"><svg width="24" height="24" viewBox="0 0 24 24"><path d="M3 4.500h18M3 7.500h18M3 10.500h18M3 13.500h18M3 16.500h18M3 19.500h18" stroke="#222" stroke-width="1.200"/></svg></button>
        <span class="tsep"></span>
        <button class="tool" aria-label="Bullets"><svg width="24" height="24" viewBox="0 0 24 24"><path d="M7 4.500h14M7 7.500h8M7 11.500h14M7 14.500h8M7 17.500h14M7 20.500h8" stroke="#222" stroke-width="1.200"/><g fill="#e95420"><circle cx="3.500" cy="6" r="1.700"/><circle cx="3.500" cy="12.500" r="1.700"/><circle cx="3.500" cy="19" r="1.700"/></g></svg></button><button class="drop" aria-label="Bullet options"></button>
        <button class="tool" aria-label="Numbering"><svg width="24" height="24" viewBox="0 0 24 24"><path d="M9 4.500h14M9 7.500h8M9 11.500h14M9 14.500h8M9 17.500h14M9 20.500h8" stroke="#222" stroke-width="1.200"/><path d="M4 4.500h4M4 8h4M6 4.500V8M2 10.500h6M2 14h6M4 10.500V14M6.500 10.500V14M0 17h8M0 20.500h8M2 17v3.500M4 17v3.500M6 17v3.500" stroke="#e95420"/></svg></button><button class="drop" aria-label="Numbering options"></button>
        <button class="tool on" aria-label="No list"><svg width="24" height="24" viewBox="0 0 24 24"><path d="M9 4.500h13M9 7.500h7M9 11.500h13M9 14.500h7M9 18h13M9 20.500h7" stroke="#222" stroke-width="1.200"/><g fill="#f7d3da" stroke="#d01e40"><circle cx="4" cy="6" r="2.500"/><circle cx="4" cy="12.500" r="2.500"/><circle cx="4" cy="19" r="2.500"/><path d="m2.500 4.500 3 3M5.500 4.500l-3 3M2.500 11l3 3M5.500 11l-3 3M2.500 17.500l3 3M5.500 17.500l-3 3"/></g></svg></button>
        <span class="tsep"></span>
        <button class="tool" aria-label="Increase indent"><svg width="24" height="24" viewBox="0 0 24 24"><path d="M12 5.500h10M12 8.500h10M12 11.500h10M4 14.500h18M4 17.500h18M4 19.500h18" stroke="#222" stroke-width="1.300"/><path d="m4 6 5 2.500L4 11z" fill="#e95420"/></svg></button>
        <button class="tool" aria-label="Decrease indent"><svg width="24" height="24" viewBox="0 0 24 24"><path d="M12 5.500h10M12 8.500h10M12 11.500h10M4 14.500h18M4 17.500h18M4 19.500h18" stroke="#222" stroke-width="1.300"/><path d="M9 6 4 8.500 9 11z" fill="#e95420"/></svg></button>
        <span class="tsep"></span>
        <button class="tool" aria-label="Line spacing"><svg width="24" height="24" viewBox="0 0 24 24"><path d="M2 5.500h12M2 7.500h12M2 10.500h12M2 14.500h12M2 16.500h12M2 19.500h12" stroke="#222" stroke-width="1.200"/><path d="M20 8v9" stroke="#e95420" stroke-width="1.300"/><path d="m20 5.500 2.500 4h-5zM20 19.500l2.500-4h-5z" fill="#e95420"/></svg></button><button class="drop" aria-label="Spacing options"></button>
        <button class="tool" aria-label="Increase paragraph spacing"><svg width="24" height="24" viewBox="0 0 24 24"><path d="M4 3.500h12M4 6h12M4 8.500h12M4 15.500h12M4 18h12M4 20.500h12" stroke="#222" stroke-width="1.200"/><path d="m22 5 2.500 4h-5zM22 20l2.500-4h-5z" fill="#e95420"/></svg></button>
        <button class="tool" aria-label="Decrease paragraph spacing" disabled><svg width="24" height="24" viewBox="0 0 24 24"><path d="M4 4.500h12M4 6.500h12M4 9h12M4 14.500h12M4 17h12M4 19.500h12" stroke="#aaa" stroke-width="1.200"/><path d="m22 9 2.500-4h-5zM22 15l2.500 4h-5z" fill="#aaa"/></svg></button>
      </div>

      <div class="d-flex flex-grow-1 overflow-hidden">
        <section class="canvas-pane d-flex flex-column flex-grow-1">
          <div class="infobar d-flex align-items-center flex-shrink-0"><svg width="30" height="30"><use href="#infoic"/></svg><span class="flex-grow-1">Help us make LibreOffice even better!</span><button type="button" class="act">Get involved</button><button type="button" class="shut" aria-label="Close message"><svg width="16" height="16"><use href="#xblue"/></svg></button></div>
          <div class="infobar d-flex align-items-center flex-shrink-0"><svg width="30" height="30"><use href="#infoic"/></svg><span class="flex-grow-1">Your donations support our worldwide community.</span><button type="button" class="act">Donate</button><button type="button" class="shut" aria-label="Close message"><svg width="16" height="16"><use href="#xblue"/></svg></button></div>
          <div class="d-flex flex-grow-1 overflow-hidden">
            <div class="d-flex flex-column flex-grow-1 position-relative">
              <div class="ruler-row d-flex justify-content-center flex-shrink-0"><span class="tab-mark"></span>
                <svg class="ruler" id="ruler" width="796" height="16" viewBox="0 0 796 16"></svg>
              </div>
              <div class="d-flex justify-content-center flex-grow-1">
                <article class="sheet">
                  <span class="corner lt"></span><span class="corner rt"></span>
                  <div class="story">
                    <svg class="hl" width="583" height="400"><path d="M212.500.5h370v399H.5v-379h212z" fill="#fad4c8" stroke="#e95420"/></svg>
                    <p class="head">presentation instruction</p>
                    <p class="head">chin9505</p>
                    <p class="head"></p>
                    <p><span class="ln full ind">describe some customs in china which are different from yours. such as: gift-</span><span class="ln full">giving culture, food culture, etc. what do you usually do if you have to face different</span><span class="ln">customs and cultures? please give us an example.</span></p>
                    <p><span class="ln full ind">do you agree that “disciples are not necessarily inferior to their teachers, while</span><span class="ln">teachers are not necessarily wiser than their disciples”? do you agree? why or why not?</span></p>
                    <p><span class="ln ind">talk about one of your family members / teachers / friends / pets / plants.</span></p>
                    <p></p>
                    <p><span class="ln full ind">prepare a presentation about 2-3 minutes before your presentation date. you</span><span class="ln full">need to talk in the front of the classroom. you can use <span class="typo">powerpoint</span>, but max 10 <span class="typo">chinese</span></span><span class="ln">characters in each page. marks will be deducted if you read a script from the beginning to</span><span class="ln">the end.</span></p>
                    <p><span class="ln full ind">please pay attention to the grammar, the pronunciations and tones and the</span><span class="ln">fluency.</span></p>
                  </div>
                  <table class="marks">
                    <colgroup><col style="width:200px"><col></colgroup>
                    <tr><td><div class="pick flush">grammar&nbsp; 5%</div></td><td class="cell-r"><div class="pick flush">pronunciation, tones and fluency&nbsp; 5%</div></td></tr>
                    <tr><td><div class="pick"><p><span class="ln full">-0.1% for each error or any</span><span class="ln full">word hard to be understood</span></p><p>max -5%</p></div></td>
                    <td class="cell-r"><div class="pick flush"><p>1) pronunciation and tones: -0.1% / 5 errors.</p><p><span class="ln full">2) repeat or break or look at your draft once or</span><span class="ln full">twice: -0%, after that -0.1% for each repeat or</span><span class="ln">break or look at draft.</span></p><p>3) read the draft from beginning to end: -2%.</p><p>max -5%.</p></div></td></tr>
                  </table>
                  <div class="caret"></div>
                </article>
              </div>
              <svg class="pointer" width="16" height="24" viewBox="0 0 16 24"><path d="M3 2.500h4l1 1 1-1h4M3 21.500h4l1-1 1 1h4M8 3.500v17" fill="none" stroke="#ddd" stroke-width="4"/><path d="M3 2.500h4l1 1 1-1h4M3 21.500h4l1-1 1 1h4M8 3.500v17" fill="none" stroke="#444" stroke-width="1.500"/></svg>
            </div>
            <div class="vbar"><div></div></div>
          </div>
        </section>
        <div class="sidegrip"><button type="button" aria-label="Hide sidebar"><svg width="5" height="8"><path d="M0 0 5 4 0 8z" fill="#fff"/></svg></button></div>
        <aside class="deck d-flex flex-column align-items-center">
          <button aria-label="Sidebar settings"><svg width="10" height="10"><path d="M0 .5h10M0 5h10M0 9.500h10" stroke="#333"/></svg></button>
          <button class="on" aria-label="Properties"><svg width="18" height="18" viewBox="0 0 18 18"><rect x="1" y="1" width="16" height="7" rx="3" fill="#e95420"/><rect x="1" y="10" width="16" height="7" rx="3" fill="#e95420"/><circle cx="13.500" cy="4.500" r="2.500" fill="#fff"/><circle cx="4.500" cy="13.500" r="2.500" fill="#fff"/></svg></button>
          <button aria-label="Styles"><svg width="24" height="24"><use href="#brushA"/></svg></button>
          <button aria-label="Gallery"><svg width="22" height="20" viewBox="0 0 22 20"><rect x="1.500" y="1.500" width="16" height="13" rx="1.500" fill="#d858c8" stroke="#4d4d4d"/><rect x="4.500" y="5.500" width="16" height="13" rx="1.500" fill="#d858c8" stroke="#333"/><path d="m8 16 2.500-4 2 2 1.500-2 2 4z" fill="#fff"/><circle cx="16.500" cy="9.500" r="1.200" fill="#fff"/></svg></button>
          <button aria-label="Navigator"><svg width="20" height="20" viewBox="0 0 20 20"><circle cx="10" cy="10" r="9.300" fill="#4a7be8" stroke="#4d4d4d" stroke-width="1.300"/><path d="m5 15 2.500-6.500 4 4z" fill="#fff"/><circle cx="10" cy="10" r="3" fill="#e9eefc"/><path d="m15 5-5.500 2.500 3 3z" fill="#e93440"/></svg></button>
          <button aria-label="Page"><svg width="18" height="20" viewBox="0 0 18 20"><path d="M3 1.500h8.500l5 4.500v11q0 1.500-1.500 1.500H3q-1.500 0-1.500-1.500V3Q1.500 1.500 3 1.500z" fill="#fff" stroke="#4d4d4d" stroke-width="1.200"/><path d="M11.500 1.500V6h5z" fill="#666"/></svg></button>
          <button aria-label="Style inspector"><svg width="24" height="24" viewBox="0 0 24 24"><use href="#brushA" width="24" height="24"/><use href="#mag" width="24" height="24"/></svg></button>
        </aside>
      </div>

      <footer class="statusbar d-flex align-items-center flex-shrink-0">
        <div style="width:30px;padding-left:11px"><svg width="14" height="14"><use href="#saveic"/></svg></div>
        <div style="width:250px">Page 1 of 1</div>
        <div style="width:406px">Selected: 207 words, 1,162 characters</div>
        <div style="width:297px">Default Page Style</div>
        <div style="width:269px" class="justify-content-center pe-1">English (USA)</div>
        <div style="width:68px"></div>
        <div style="width:28px;padding-left:6px"><svg width="17" height="11" viewBox="0 0 17 11" fill="none"><rect x=".7" y="2" width="7.600" height="7" stroke="#e95420" stroke-width="1.400"/><path d="M11.500.7h5M11.500 10.300h5M14 1v9" stroke="#222" stroke-width="1.300"/></svg></div>
        <div style="width:29px"></div>
        <div class="flex-grow-1"></div>
        <div style="width:77px;padding-left:12px"><svg width="56" height="12" viewBox="0 0 56 12" fill="none" stroke="#aaa" stroke-width="1.200"><path d="M1 1.500h4.500l2.500 2.500v6.500H1z" stroke="#444"/><path d="M16 1.500h4l2 2v7h-6zM25 1.500h4l2 2v7h-6zM39 1.500h4l3 3v6h-7zM47 10.500V4.500l3-3h1l3 3v6z"/></svg></div>
        <div style="width:142px"><button aria-label="Zoom out"><svg width="10" height="10"><path d="M1 5h8" stroke="#555" stroke-width="2"/></svg></button><input class="zoomer" type="range" min="0" max="100" value="50" aria-label="Zoom"><button aria-label="Zoom in"><svg width="10" height="10"><path d="M1 5h8M5 1v8" stroke="#555" stroke-width="2"/></svg></button></div>
        <div style="width:49px">100%</div>
      </footer>
    </main>
  </div>
</div>
<script src="https://cdn.jsdelivr.net/npm/bootstrap@5.3.0/dist/js/bootstrap.bundle.min.js"></script>
<script>
  // Centimetre ruler: margins boxed, a number per centimetre, a tick per half
  const cm = 37.8, zero = 107, end = 689;
  let out = `<rect x="${zero}" y="0" width="${end - zero}" height="15" fill="#fff"/>` +
    `<path d="M1.500.5h105v14H1.500zM${end + .5}.5h105v14h-105z" fill="none" stroke="#b5b5b5"/>`;
  for (let i = -2; i <= 18; i++) {
    const x = Math.round(zero + i * cm);
    if (i) out += `<text x="${Math.min(x, 787)}" y="11">${Math.abs(i)}</text>`;
    if (i > 0 && i < 16) out += `<path d="M${x + .5} 0v1M${x + .5} 14v1" stroke="#aaa"/>`;
  }
  for (let i = -2.5; i <= 17.5; i++) {
    const x = Math.round(zero + i * cm) + .5;
    out += `<path d="M${x} 6v3" stroke="#aaa"/>`;
  }
  document.getElementById('ruler').innerHTML = out;
</script>
</body>
</html>
